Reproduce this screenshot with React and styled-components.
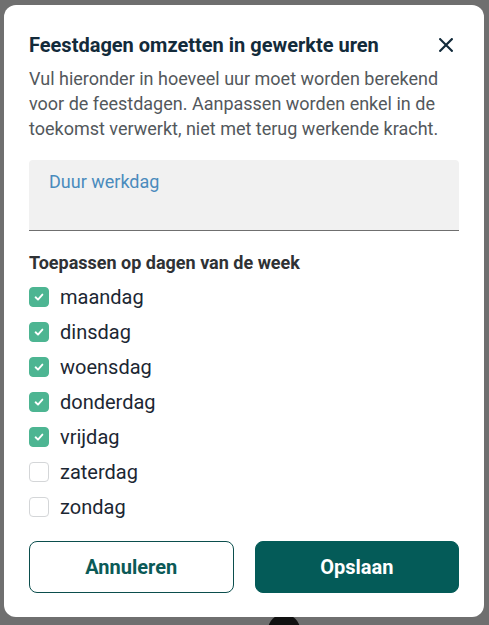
import React, { useState } from "react";
import styled, { createGlobalStyle } from "styled-components";

const Global = createGlobalStyle`
  html, body { margin: 0; padding: 0; }
  body {
    font-family: Roboto, "Liberation Sans", Arial, sans-serif;
    background: #dedede;
    -webkit-font-smoothing: antialiased;
  }
  * { box-sizing: border-box; }
`;

const Page = styled.div`
  min-height: 100vh;
  padding: 614px 0 0 268px;
  display: flex;
  align-items: flex-start;
  gap: 8px;
`;

const ToggleKnob = styled.span`
  width: 32px;
  height: 32px;
  border-radius: 50%;
  background: #222;
`;

const Overlay = styled.div`
  position: fixed;
  inset: 0;
  background: rgba(0, 0, 0, 0.5);
  display: flex;
  align-items: flex-start;
  padding: 5px 0 0 4px;
`;

const Dialog = styled.div`
  width: 480px;
  background: #fff;
  border-radius: 12px;
  padding: 26px 25px 24px 25px;
  display: flex;
  flex-direction: column;
`;

const Header = styled.div`
  display: flex;
  align-items: center;
  justify-content: space-between;
`;

const Title = styled.h2`
  margin: 0;
  font-size: 20px;
  line-height: 28px;
  font-weight: 700;
  color: #132b3b;
`;

const CloseButton = styled.button`
  width: 24px;
  height: 24px;
  border: 0;
  background: transparent;
  padding: 0;
  margin-right: 1px;
  display: flex;
  align-items: center;
  justify-content: center;
  color: #132b3b;
  cursor: pointer;
`;

const Description = styled.p`
  margin: 7px 0 0;
  font-size: 18px;
  line-height: 25px;
  color: #53585c;
`;

const Field = styled.div`
  margin-top: 19px;
  height: 71px;
  background: #f1f1f1;
  border-radius: 4px 4px 0 0;
  border-bottom: 1px solid #6f6f6f;
  padding: 10px 20px 0;
`;

const FieldLabel = styled.label`
  display: block;
  font-size: 18px;
  line-height: 24px;
  color: #4a8bbd;
`;

const SectionTitle = styled.div`
  margin-top: 20px;
  font-size: 18px;
  line-height: 24px;
  font-weight: 700;
  color: #2f3235;
`;

const DayList = styled.div`
  margin-top: 4px;
  display: flex;
  flex-direction: column;
`;

const DayRow = styled.label`
  height: 35px;
  display: flex;
  align-items: center;
  gap: 11px;
  cursor: pointer;
`;

const Box = styled.span`
  width: 20px;
  height: 20px;
  border-radius: 4px;
  flex: none;
  display: flex;
  align-items: center;
  justify-content: center;
  background: ${(p) => (p.$checked ? "#4db592" : "#fff")};
  border: 1px solid ${(p) => (p.$checked ? "#4db592" : "#d4d6d8")};
`;

const DayName = styled.span`
  font-size: 20px;
  line-height: 24px;
  color: #1c2733;
`;

const Actions = styled.div`
  margin-top: 17px;
  display: flex;
  gap: 21px;
`;

const Button = styled.button`
  flex: 1;
  height: 52px;
  border-radius: 8px;
  font-family: inherit;
  font-size: 20px;
  font-weight: 700;
  cursor: pointer;
  border: 1px solid;
  background: ${(p) => (p.$primary ? "#045b58" : "#fff")};
  color: ${(p) => (p.$primary ? "#fff" : "#0b5a57")};
  border-color: ${(p) => (p.$primary ? "#045b58" : "#0b4e4d")};
`;

const days = [
  ["maandag", true],
  ["dinsdag", true],
  ["woensdag", true],
  ["donderdag", true],
  ["vrijdag", true],
  ["zaterdag", false],
  ["zondag", false],
];

function Check() {
  return (
    <svg width="12" height="12" viewBox="0 0 12 12" fill="none">
      <path d="M2.6 6.3 L5 8.6 L9.4 3.6" stroke="#fff" strokeWidth="1.9" strokeLinecap="round" strokeLinejoin="round" />
    </svg>
  );
}

export default function App() {
  const [state, setState] = useState(Object.fromEntries(days));
  return (
    <>
      <Global />
      <Page>
        <ToggleKnob />
      </Page>
      <Overlay>
        <Dialog role="dialog">
          <Header>
            <Title>Feestdagen omzetten in gewerkte uren</Title>
            <CloseButton aria-label="Sluiten">
              <svg width="14" height="14" viewBox="0 0 14 14">
                <path d="M1.2 1.2 L12.8 12.8 M12.8 1.2 L1.2 12.8" stroke="currentColor" strokeWidth="2.2" strokeLinecap="square" />
              </svg>
            </CloseButton>
          </Header>
          <Description>
            Vul hieronder in hoeveel uur moet worden berekend voor de feestdagen. Aanpassen worden enkel in de toekomst verwerkt, niet met terug werkende kracht.
          </Description>
          <Field>
            <FieldLabel>Duur werkdag</FieldLabel>
          </Field>
          <SectionTitle>Toepassen op dagen van de week</SectionTitle>
          <DayList>
            {days.map(([name]) => (
              <DayRow key={name} onClick={() => setState((s) => ({ ...s, [name]: !s[name] }))}>
                <Box $checked={state[name]}>{state[name] && <Check />}</Box>
                <DayName>{name}</DayName>
              </DayRow>
            ))}
          </DayList>
          <Actions>
            <Button>Annuleren</Button>
            <Button $primary>Opslaan</Button>
          </Actions>
        </Dialog>
      </Overlay>
    </>
  );
}
